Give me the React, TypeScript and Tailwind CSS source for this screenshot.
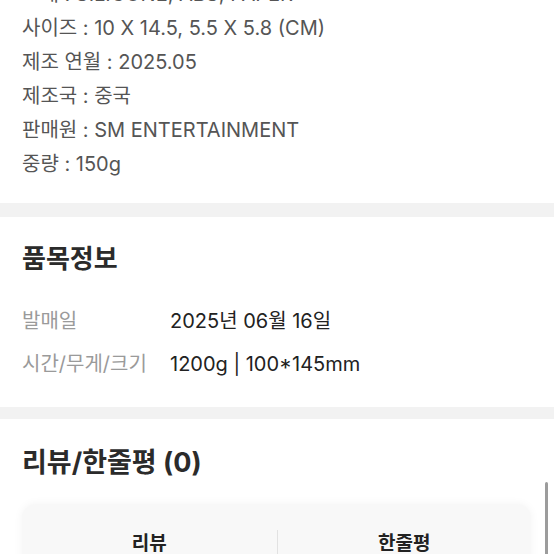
import React from 'react';

const specs = [
  '소재 : SILICONE, ABS, PAPER',
  '사이즈 : 10 X 14.5, 5.5 X 5.8 (CM)',
  '제조 연월 : 2025.05',
  '제조국 : 중국',
  '판매원 : SM ENTERTAINMENT',
  '중량 : 150g',
];

const rows = [
  { label: '발매일', value: '2025년 06월 16일' },
  { label: '시간/무게/크기', value: '1200g | 100*145mm' },
];

export default function App() {
  return (
    <div
      className="relative w-[554px] h-[554px] overflow-hidden bg-white"
      style={{ fontFamily: 'Inter, "Noto Sans CJK KR", sans-serif' }}
    >
      {/* 상품 설명 */}
      <div className="px-[22px] pb-[22px]">
        <div className="-mt-[23px] flex flex-col">
          {specs.map((s) => (
            <p key={s} className="text-[20px] leading-[34px] text-[#555]">
              {s}
            </p>
          ))}
        </div>
      </div>

      <div className="h-[14px] bg-[#f2f2f2]" />

      {/* 품목정보 */}
      <section className="px-[22px] pt-[26px] pb-[29px]">
        <h2 className="text-[26px] leading-[32px] font-bold text-[#2b2b2b]">품목정보</h2>
        <div className="mt-[32px] flex flex-col gap-[15px]">
          {rows.map((r) => (
            <div key={r.label} className="flex text-[20px] leading-[28px]">
              <span className="w-[148px] text-[#9a9a9a]">{r.label}</span>
              <span className="text-[#222]">{r.value}</span>
            </div>
          ))}
        </div>
      </section>

      <div className="h-[12px] bg-[#f2f2f2]" />

      {/* 리뷰/한줄평 */}
      <section className="pt-[28px]">
        <h2 className="px-[22px] text-[27px] leading-[32px] font-bold text-[#2b2b2b]">
          리뷰/한줄평 (0)
        </h2>
        <div className="mt-[25px] ml-[22px] mr-[23px] rounded-[14px] bg-[#f8f8f8] shadow-[0_0_10px_rgba(0,0,0,0.05)] pt-[26px] pb-[20px]">
          <div className="grid grid-cols-2">
            <div className="text-center text-[19px] leading-[28px] font-bold text-[#222]">리뷰</div>
            <div className="border-l border-[#e2e2e2] text-center text-[19px] leading-[28px] font-bold text-[#222]">
              한줄평
            </div>
          </div>
        </div>
      </section>

      {/* scrollbar */}
      <div className="absolute left-[545px] top-[482px] w-[3px] h-[80px] rounded-full bg-[#9c9c9c]" />
    </div>
  );
}
